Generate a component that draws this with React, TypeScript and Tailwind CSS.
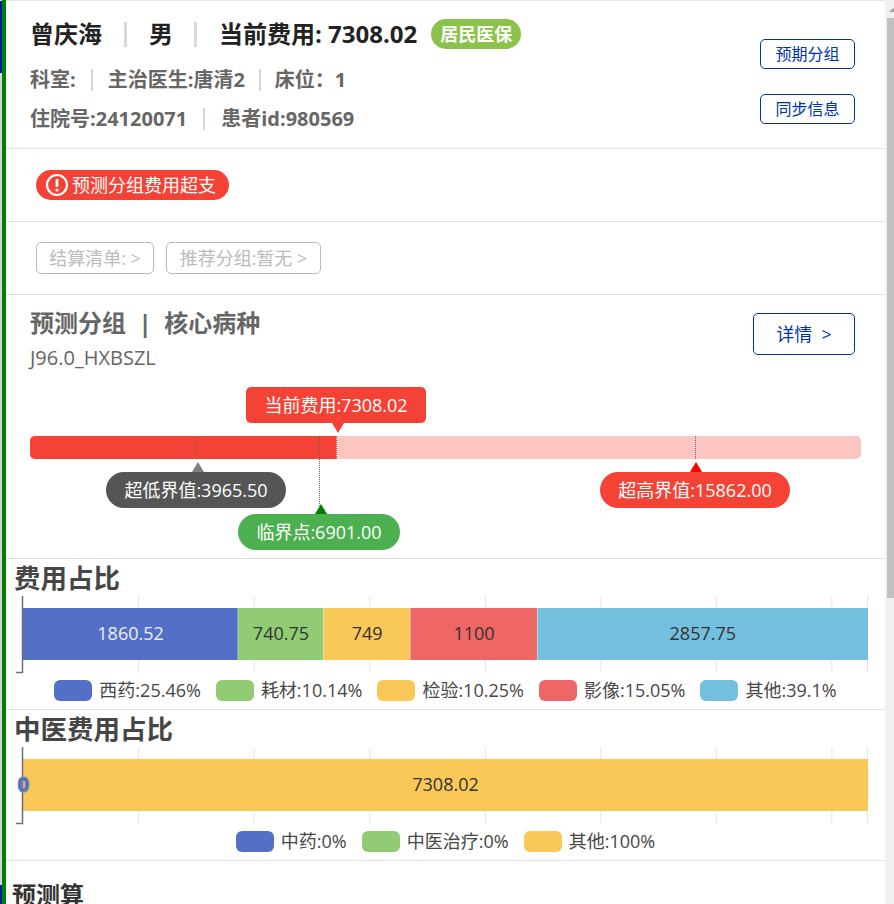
const ticks = [138.7, 254.2, 369.8, 485.4, 600.8, 716.4, 831.9, 867.5];

type Seg = { v: string; w: number; c: string; t: string };

function Chart({ segs, zero }: { segs: Seg[]; zero?: boolean }) {
  let x = 17;
  return (
    <svg width="879" height="78" className="block" style={{ fontFamily: "'Open Sans', sans-serif" }}>
      {ticks.map((t) => (
        <line key={t} x1={t - 6} x2={t - 6} y1="0" y2="76" stroke="#E0E6F1" strokeWidth="1" />
      ))}
      {segs.map((s, i) => {
        const el = (
          <g key={i}>
            <rect x={x} y="12" width={s.w} height="52" fill={s.c} />
            {i < segs.length - 1 && <line x1={x + s.w} x2={x + s.w} y1="12" y2="64" stroke="#ffffff" strokeOpacity="0.7" />}
            <text x={x + s.w / 2} y="44" textAnchor="middle" fontSize="18" fill={s.t}>{s.v}</text>
          </g>
        );
        x += s.w;
        return el;
      })}
      <path d="M16.5 0V76.5H10" fill="none" stroke="#6E7079" strokeWidth="1.5" />
      {zero && (
        <>
          <text x="17.5" y="44" textAnchor="middle" fontSize="18" fill="#5470c6" stroke="#6f8bdc" strokeWidth="3">0</text>
          <text x="17.5" y="44" textAnchor="middle" fontSize="18" fill="#5470c6" stroke="#5d6b8c" strokeWidth="0.6">0</text>
        </>
      )}
    </svg>
  );
}

function Legend({ items, className }: { items: { c: string; l: string }[]; className: string }) {
  return (
    <div className={`flex items-center justify-center gap-[15px] ${className}`}>
      {items.map((i) => (
        <div key={i.l} className="flex items-center gap-[7px]">
          <span className="block w-[38px] h-[21px] rounded-[6px]" style={{ backgroundColor: i.c }} />
          <span className="text-[18px] leading-[21px] text-[#464646]">{i.l}</span>
        </div>
      ))}
    </div>
  );
}

function Sep({ className }: { className: string }) {
  return <span className={`inline-block bg-[#dcd6d6] ${className}`} />;
}

function AlertIcon() {
  return (
    <svg width="24" height="24" viewBox="0 0 24 24" className="shrink-0">
      <circle cx="12" cy="12" r="10" fill="none" stroke="#fff" strokeWidth="2.2" />
      <rect x="10.6" y="6" width="2.8" height="8" rx="1" fill="#fff" />
      <circle cx="12" cy="17" r="1.6" fill="#fff" />
    </svg>
  );
}

function Marker({ x, h = 23 }: { x: number; h?: number }) {
  return <span className="absolute top-0 w-0 border-l border-dotted border-[#666]" style={{ left: x, height: h }} />;
}

function Up({ x, top, c }: { x: number; top: number; c: string }) {
  return (
    <svg width="14" height="10" className="absolute" style={{ left: x, top }}>
      <path d="M7 0L13 10H1Z" fill={c} />
    </svg>
  );
}

export default function App() {
  return (
    <div className="h-[904px] w-[894px] overflow-hidden flex bg-white font-['Open_Sans','Noto_Sans_CJK_SC',sans-serif]">
      <div className="w-[2px] h-full flex flex-col bg-[#d4d4d4] shrink-0">
        <div className="h-[1px] bg-[#e5e5e5]" />
        <div className="h-[72px] bg-[#00209f]" />
        <div className="flex-1" />
        <div className="h-[19px] bg-[#00209f]" />
      </div>
      <div className="w-[4px] h-full bg-[#008000] shrink-0" />

      <main className="w-[879px] shrink-0 h-full border-t border-[#e5e5e5]">
        {/* Patient header */}
        <section className="h-[148px] border-b border-[#e0e0e0] flex justify-between pl-[24px] pr-[30px]">
          <div>
            <div className="flex items-center h-[34px] mt-[16px] text-[24px] font-bold text-[#222]">
              <span className="leading-none">曾庆海</span>
              <Sep className="w-[3px] h-[25px] ml-[22px] mr-[22px]" />
              <span className="leading-none">男</span>
              <Sep className="w-[3px] h-[25px] ml-[21px] mr-[22px]" />
              <span className="leading-none whitespace-nowrap">当前费用: 7308.02</span>
              <span className="ml-[14px] w-[90px] h-[30px] rounded-full bg-[#8bc34a] text-white text-[18px] leading-[30px] text-center">居民医保</span>
            </div>
            <div className="flex items-center h-[28px] mt-[15px] text-[20px] font-bold text-[#666]">
              <span>科室:</span>
              <Sep className="w-[2px] h-[22px] ml-[15px] mr-[15px]" />
              <span>主治医生:唐清2</span>
              <Sep className="w-[2px] h-[22px] ml-[14px] mr-[14px]" />
              <span>床位：1</span>
            </div>
            <div className="flex items-center h-[28px] mt-[11px] text-[20px] font-bold text-[#666]">
              <span>住院号:24120071</span>
              <Sep className="w-[2px] h-[22px] ml-[16px] mr-[16px]" />
              <span>患者id:980569</span>
            </div>
          </div>
          <div className="flex flex-col gap-[25px] pt-[38px]">
            <button className="w-[95px] h-[30px] border border-[#0033aa] rounded-[5px] text-[16px] leading-none text-[#0033aa]">预期分组</button>
            <button className="w-[95px] h-[30px] border border-[#0033aa] rounded-[5px] text-[16px] leading-none text-[#0033aa]">同步信息</button>
          </div>
        </section>

        {/* Alert */}
        <section className="h-[73px] border-b border-[#e0e0e0] pl-[30px] pt-[21px]">
          <div className="inline-flex items-center w-[193px] h-[30px] rounded-full bg-[#f44336] pl-[9px] gap-[3px] text-white text-[18px] leading-none whitespace-nowrap">
            <AlertIcon />
            <span>预测分组费用超支</span>
          </div>
        </section>

        {/* Disabled links */}
        <section className="h-[73px] border-b border-[#e0e0e0] pl-[30px] pt-[20px] flex gap-[12px]">
          <div className="w-[118px] h-[32px] border border-[#bbb] rounded-[5px] text-[18px] leading-[30px] text-[#bbb] text-center whitespace-nowrap">结算清单: &gt;</div>
          <div className="w-[155px] h-[32px] border border-[#bbb] rounded-[5px] text-[18px] leading-[30px] text-[#bbb] text-center whitespace-nowrap">推荐分组:暂无 &gt;</div>
        </section>

        {/* Prediction group */}
        <section className="h-[264px] border-b border-[#e0e0e0] pl-[24px] pr-[30px]">
          <div className="flex justify-between">
            <div>
              <div className="mt-[10px] text-[24px] leading-[36px] font-bold text-[#666] whitespace-pre">预测分组  |  核心病种</div>
              <div className="mt-[2px] text-[20px] leading-[30px] text-[#666]">J96.0_HXBSZL</div>
            </div>
            <button className="mt-[18px] w-[102px] h-[42px] border border-[#0033aa] rounded-[5px] text-[18px] leading-none text-[#0033aa] whitespace-pre">详情  &gt;</button>
          </div>
          <div className="relative h-[36px] mt-[14px]">
            <div className="absolute left-[216px] top-0 w-[180px] h-[36px] rounded-[5px] bg-[#f44336] text-white text-[18px] leading-[36px] text-center">当前费用:7308.02</div>
            <svg width="14" height="10" className="absolute left-[301px] top-[36px]">
              <path d="M1 0H13L7 10Z" fill="#f44336" />
            </svg>
          </div>
          <div className="relative mt-[13px] w-[831px] h-[23px]">
            <div className="h-[23px] rounded-[5px] bg-[#fbc5c1] overflow-hidden">
              <div className="h-full w-[306px] bg-[#f44336]" />
            </div>
            <Marker x={166} />
            <Marker x={289} h={70} />
            <Marker x={306} />
            <Marker x={665} />
            <div className="absolute inset-x-0 top-[23px]">
              <Up x={161} top={3} c="#808080" />
              <Up x={284} top={45} c="#008000" />
              <Up x={659} top={3} c="#ff0000" />
              <div className="absolute left-[76px] top-[13px] w-[180px] h-[36px] rounded-full bg-[#555] text-white text-[18px] leading-[36px] text-center">超低界值:3965.50</div>
              <div className="absolute left-[208px] top-[55px] w-[162px] h-[36px] rounded-full bg-[#4caf50] text-white text-[18px] leading-[36px] text-center">临界点:6901.00</div>
              <div className="absolute left-[570px] top-[13px] w-[190px] h-[36px] rounded-full bg-[#f44336] text-white text-[18px] leading-[36px] text-center">超高界值:15862.00</div>
            </div>
          </div>
        </section>

        {/* Cost share */}
        <section className="h-[151px] border-b border-[#e0e0e0]">
          <h2 className="pl-[8px] h-[37px] text-[26.5px] leading-[38px] font-bold text-[#464646]">费用占比</h2>
          <Chart
            segs={[
              { v: "1860.52", w: 215.1, c: "#5470c6", t: "#eeeeee" },
              { v: "740.75", w: 85.7, c: "#91cc75", t: "#333333" },
              { v: "749", w: 86.6, c: "#fac858", t: "#333333" },
              { v: "1100", w: 127.2, c: "#ee6666", t: "#333333" },
              { v: "2857.75", w: 330.4, c: "#73c0de", t: "#333333" },
            ]}
          />
          <Legend
            className="mt-[6px]"
            items={[
              { c: "#5470c6", l: "西药:25.46%" },
              { c: "#91cc75", l: "耗材:10.14%" },
              { c: "#fac858", l: "检验:10.25%" },
              { c: "#ee6666", l: "影像:15.05%" },
              { c: "#73c0de", l: "其他:39.1%" },
            ]}
          />
        </section>

        {/* TCM cost share */}
        <section className="h-[151px] border-b border-[#e0e0e0]">
          <h2 className="pl-[8px] h-[37px] text-[26.5px] leading-[38px] font-bold text-[#464646]">中医费用占比</h2>
          <Chart zero segs={[{ v: "7308.02", w: 845, c: "#fac858", t: "#333333" }]} />
          <Legend
            className="mt-[6px]"
            items={[
              { c: "#5470c6", l: "中药:0%" },
              { c: "#91cc75", l: "中医治疗:0%" },
              { c: "#fac858", l: "其他:100%" },
            ]}
          />
        </section>

        <h2 className="pl-[6px] mt-[16px] text-[24px] leading-[36px] font-bold text-[#333]">预测算</h2>
      </main>

      {/* Scrollbar */}
      <div className="w-[9px] shrink-0 h-full bg-[#f0f0f0] pl-[2px] relative overflow-hidden">
        <svg width="9" height="6" className="absolute left-[4px] top-[8px]">
          <path d="M4 0L8 4H0Z" fill="#a3a3a3" />
        </svg>
        <div className="w-[7px] h-[580px] mt-[18px] bg-[#c1c1c1]" />
      </div>
    </div>
  );
}
